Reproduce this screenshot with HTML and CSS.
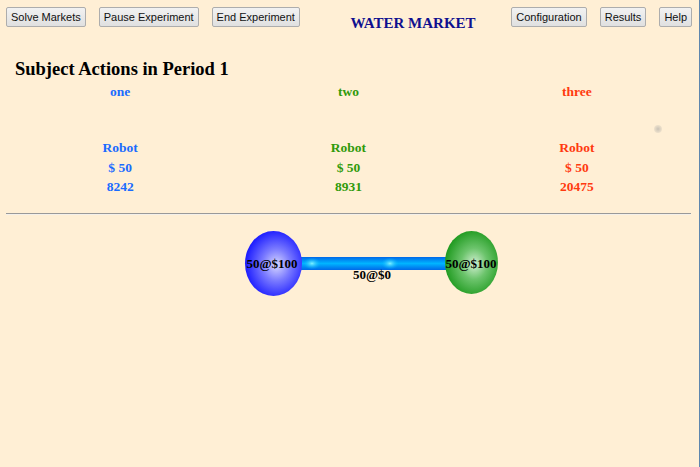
FILE: index.html
```html
<!DOCTYPE html>
<html>
<head>
<meta charset="utf-8">
<link rel="stylesheet" href="styles.css">
</head>
<body>
<div class="page">
  <header class="topbar">
    <div class="btn-group">
      <button class="btn">Solve Markets</button>
      <button class="btn">Pause Experiment</button>
      <button class="btn">End Experiment</button>
    </div>
    <div class="title">WATER MARKET</div>
    <div class="btn-group">
      <button class="btn">Configuration</button>
      <button class="btn">Results</button>
      <button class="btn">Help</button>
    </div>
  </header>

  <h2 class="heading">Subject Actions in Period 1</h2>

  <div class="subjects">
    <div class="subject c-blue">
      <div class="name">one</div>
      <div class="gap"></div>
      <div class="row">Robot</div>
      <div class="row">$ 50</div>
      <div class="row">8242</div>
    </div>
    <div class="subject c-green">
      <div class="name">two</div>
      <div class="gap"></div>
      <div class="row">Robot</div>
      <div class="row">$ 50</div>
      <div class="row">8931</div>
    </div>
    <div class="subject c-red">
      <div class="name">three</div>
      <div class="gap"><span class="dot"></span></div>
      <div class="row">Robot</div>
      <div class="row">$ 50</div>
      <div class="row">20475</div>
    </div>
  </div>

  <hr class="rule">

  <svg class="network" width="700" height="90" viewBox="0 0 700 90">
    <defs>
      <radialGradient id="gBlue" cx="55%" cy="52%" r="55%">
        <stop offset="0%" stop-color="#d8d8ff"/>
        <stop offset="45%" stop-color="#7a7aff"/>
        <stop offset="100%" stop-color="#1a1aff"/>
      </radialGradient>
      <radialGradient id="gGreen" cx="55%" cy="52%" r="55%">
        <stop offset="0%" stop-color="#d4f0d4"/>
        <stop offset="45%" stop-color="#6cc46c"/>
        <stop offset="100%" stop-color="#1f9a1f"/>
      </radialGradient>
      <linearGradient id="gBar" x1="0" y1="0" x2="0" y2="1">
        <stop offset="0%" stop-color="#0068e8"/>
        <stop offset="50%" stop-color="#00b4ff"/>
        <stop offset="100%" stop-color="#0068e8"/>
      </linearGradient>
      <radialGradient id="gGlow" cx="50%" cy="50%" r="50%">
        <stop offset="0%" stop-color="#7ff0ff"/>
        <stop offset="100%" stop-color="#00b4ff" stop-opacity="0"/>
      </radialGradient>
    </defs>
    <rect x="298" y="37" width="150" height="13" fill="url(#gBar)"/>
    <ellipse cx="312" cy="43.5" rx="9" ry="6" fill="url(#gGlow)"/>
    <ellipse cx="390" cy="43.5" rx="9" ry="6" fill="url(#gGlow)"/>
    <ellipse cx="273.5" cy="43.5" rx="28.5" ry="32.5" fill="url(#gBlue)"/>
    <ellipse cx="471.5" cy="42.5" rx="26.5" ry="31.5" fill="url(#gGreen)"/>
    <text class="lbl" x="272" y="48" text-anchor="middle">50@$100</text>
    <text class="lbl" x="471" y="48" text-anchor="middle">50@$100</text>
    <text class="lbl" x="372" y="59" text-anchor="middle">50@$0</text>
  </svg>
</div>
</body>
</html>
```

FILE: styles.css
```css
html, body {
  margin: 0;
  padding: 0;
  background: #ffefd5;
}
body {
  font-family: "Liberation Serif", "Times New Roman", serif;
}
.page {
  box-sizing: border-box;
  width: 700px;
  min-height: 467px;
  border-right: 1px solid #5f86ad;
}
.topbar {
  display: flex;
  align-items: flex-start;
  padding: 7px 7px 0 6px;
}
.btn-group {
  display: flex;
  gap: 13px;
}
.btn {
  font-family: "Liberation Sans", Arial, sans-serif;
  font-size: 11px;
  color: #111;
  height: 20px;
  padding: 0 4px;
  border: 1px solid #adadad;
  border-radius: 2px;
  background: linear-gradient(#f2f2f2, #e0e0e0);
  margin: 0;
}
.title {
  flex: 1;
  text-align: center;
  padding-left: 15px;
  padding-top: 8px;
  font-size: 15px;
  font-weight: bold;
  color: #10108f;
}
.heading {
  margin: 25px 0 0 15px;
  font-size: 18.5px;
  font-weight: bold;
  color: #000;
  line-height: 24px;
}
.subjects {
  display: grid;
  grid-template-columns: repeat(3, 1fr);
  padding: 0 8px 0 6px;
  margin-top: 1px;
  font-size: 13.5px;
  font-weight: bold;
  text-align: center;
}
.name { line-height: 20px; }
.gap {
  height: 36px;
  position: relative;
}
.row { line-height: 19.5px; }
.c-blue { color: #1a6bff; }
.c-green { color: #2f9a0a; }
.c-red { color: #ff3a0f; }
.dot {
  position: absolute;
  left: 191px;
  top: 23px;
  width: 8px;
  height: 8px;
  border-radius: 50%;
  background: radial-gradient(#c9c2b6, rgba(230,222,205,0));
}
.rule {
  margin: 16px 8px 0 6px;
  border: 0;
  border-top: 1px solid #999;
  border-bottom: 1px solid #f4f0ea;
  height: 0;
}
.network {
  display: block;
  margin-top: 5px;
}
.lbl {
  font-family: "Liberation Serif", "Times New Roman", serif;
  font-size: 13px;
  font-weight: bold;
  fill: #000;
}
```
